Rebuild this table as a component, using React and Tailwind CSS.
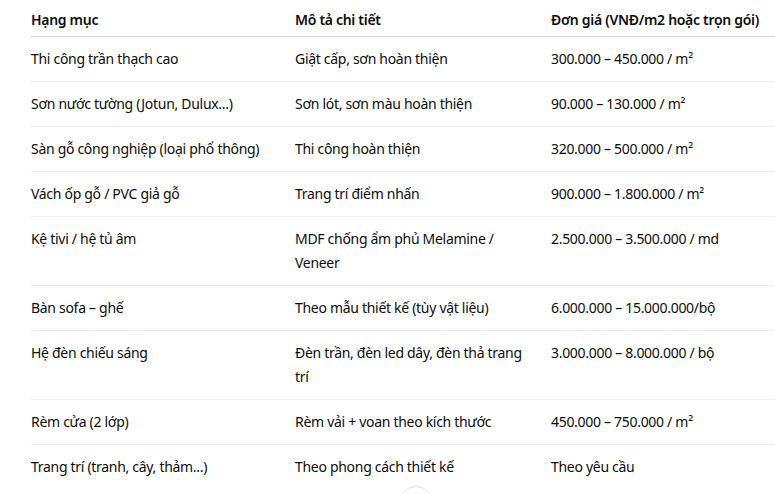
import React from "react";

const rows = [
  ["Thi công trần thạch cao", "Giật cấp, sơn hoàn thiện", "300.000 – 450.000 / m²"],
  ["Sơn nước tường (Jotun, Dulux...)", "Sơn lót, sơn màu hoàn thiện", "90.000 – 130.000 / m²"],
  ["Sàn gỗ công nghiệp (loại phổ thông)", "Thi công hoàn thiện", "320.000 – 500.000 / m²"],
  ["Vách ốp gỗ / PVC giả gỗ", "Trang trí điểm nhấn", "900.000 – 1.800.000 / m²"],
  ["Kệ tivi / hệ tủ âm", "MDF chống ẩm phủ Melamine / Veneer", "2.500.000 – 3.500.000 / md"],
  ["Bàn sofa – ghế", "Theo mẫu thiết kế (tùy vật liệu)", "6.000.000 – 15.000.000/bộ"],
  ["Hệ đèn chiếu sáng", "Đèn trần, đèn led dây, đèn thả trang trí", "3.000.000 – 8.000.000 / bộ"],
  ["Rèm cửa (2 lớp)", "Rèm vải + voan theo kích thước", "450.000 – 750.000 / m²"],
  ["Trang trí (tranh, cây, thảm...)", "Theo phong cách thiết kế", "Theo yêu cầu"],
];

export default function App() {
  return (
    <div
      className="relative w-[775px] h-[494px] overflow-hidden bg-white text-[#0d0d0d] text-[14px] tracking-[-0.3px]"
      style={{ fontFamily: '"Noto Sans", "Open Sans", sans-serif' }}
    >
      <div className="pl-[31px]">
        <div className="grid grid-cols-[264px_256px_1fr] h-[37px] border-b border-[#d9d9d9] pt-[8px] leading-6 font-semibold">
          <div>Hạng mục</div>
          <div>Mô tả chi tiết</div>
          <div className="whitespace-nowrap">Đơn giá (VNĐ/m2 hoặc trọn gói)</div>
        </div>
        {rows.map((r, i) => (
          <div
            key={i}
            className={
              i === rows.length - 1
                ? "grid grid-cols-[264px_256px_1fr] py-[10px] leading-6"
                : "grid grid-cols-[264px_256px_1fr] py-[10px] leading-6 border-b border-[#ececec]"
            }
          >
            <div className="pr-4">{r[0]}</div>
            <div className="pr-4">{r[1]}</div>
            <div>{r[2]}</div>
          </div>
        ))}
      </div>
      <div className="absolute left-[400px] top-[486px] w-[32px] h-[32px] rounded-full border border-[#e5e5e5] bg-white"></div>
    </div>
  );
}
